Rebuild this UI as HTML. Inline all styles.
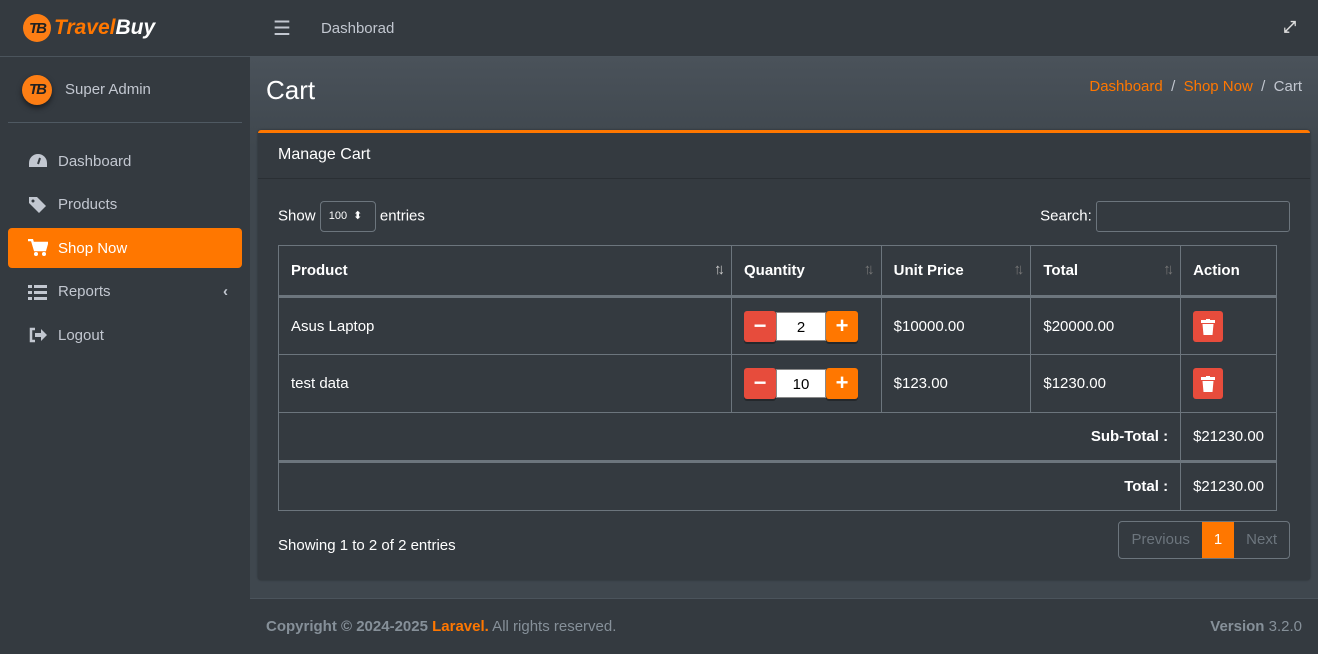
<!DOCTYPE html>
<html><head><meta charset="utf-8"><style>
*{box-sizing:border-box;margin:0;padding:0}
body{width:1318px;height:654px;overflow:hidden;background:#454d55;font-family:"Liberation Sans",sans-serif;color:#fff;font-size:15px;position:relative}
.side{position:absolute;left:0;top:0;width:250px;height:654px;background:#343a40;box-shadow:2px 0 6px rgba(0,0,0,.4)}
.brand{height:57px;border-bottom:1px solid #4b545c;display:flex;align-items:center;padding-left:23px}
.logo{width:28px;height:28px;border-radius:50%;background:#fd7e14;color:#222;font-weight:bold;font-style:italic;font-size:15px;display:flex;align-items:center;justify-content:center;letter-spacing:-2px}
.user{height:66px;margin:0 8px;border-bottom:1px solid #4f5962;display:flex;align-items:center;padding-left:14px;color:#c2c7d0}
.nav{padding-top:18px}
.nav div{height:40px;margin:0 8px 3.5px;border-radius:4px;display:flex;align-items:center;padding-left:20px;color:#c2c7d0;position:relative}
.nav div svg{margin-right:10px}
.nav .act{background:#ff7700;color:#fff}
.top{position:absolute;left:250px;top:0;right:0;height:57px;background:#343a40;border-bottom:1px solid #4b545c;display:flex;align-items:center}
.main{position:absolute;left:250px;top:57px;right:0;height:541px;background:linear-gradient(#4a525a,#3f474e 90px,#3f474e)}
.card{position:absolute;left:8px;top:73px;width:1052px;height:450px;background:#343a40;border-top:3px solid #ff7700;border-radius:3px;box-shadow:0 0 2px rgba(0,0,0,.4)}
table{position:absolute;left:20px;top:112px;width:999px;border-collapse:collapse;font-size:15px}
td,th{border:1px solid #6c757d;padding:0 12px;text-align:left;vertical-align:middle}
th{height:51px;border-bottom:3px solid #6c757d;position:relative}
.srt{position:absolute;right:10px;top:15px;color:#777;font-size:15px;letter-spacing:-4px;font-weight:normal}
.qb{display:inline-block;width:32px;height:31px;vertical-align:middle;text-align:center;line-height:30px;font-weight:bold;font-size:22px;border-radius:3px;box-shadow:0 2px 0 rgba(0,0,0,.3)}
.qi{display:inline-block;width:50px;height:29px;background:#fff;color:#000;vertical-align:middle;text-align:center;line-height:29px;border:1px solid #888}
.del{display:inline-block;width:30px;height:31px;background:#e74c3c;border-radius:3px;position:relative;top:2px}
.del svg{position:absolute;left:8px;top:8px}
.foot{position:absolute;left:250px;top:598px;right:0;height:56px;background:#343a40;border-top:1px solid #4b545c;display:flex;align-items:center;justify-content:space-between;padding:0 16px;color:#869099}
</style></head><body>
<div class="side">
 <div class="brand"><div class="logo">TB</div><span style="margin-left:3px;font-style:italic;font-weight:bold;font-size:21px;color:#ff7700">Travel<span style="color:#fff">Buy</span></span></div>
 <div class="user"><div class="logo" style="width:30px;height:30px;box-shadow:0 3px 6px rgba(0,0,0,.5)">TB</div><span style="margin-left:13px">Super Admin</span></div>
 <div class="nav">
  <div><svg width="20" height="16" viewBox="0 0 20 16"><path d="M10 1a9 9 0 0 0-9 9v4h18v-4a9 9 0 0 0-9-9z" fill="#c2c7d0"/><path d="M10 11l2-6" stroke="#343a40" stroke-width="2"/></svg>Dashboard</div>
  <div><svg width="20" height="18" viewBox="0 0 20 18"><path d="M1 1h8l9 9-7 7-10-10z" fill="#c2c7d0"/><circle cx="5" cy="5" r="1.5" fill="#343a40"/></svg>Products</div>
  <div class="act"><svg width="20" height="18" viewBox="0 0 20 18"><path d="M0 1h4l3 10h10l2-7H6" fill="none" stroke="#fff" stroke-width="2.5"/><path d="M6 4h13l-2 7H8z" fill="#fff"/><circle cx="8" cy="15" r="2" fill="#fff"/><circle cx="16" cy="15" r="2" fill="#fff"/></svg>Shop Now</div>
  <div><svg width="20" height="16" viewBox="0 0 20 16"><g fill="#c2c7d0"><rect x="0" y="1" width="4" height="3"/><rect x="0" y="7" width="4" height="3"/><rect x="0" y="13" width="4" height="3"/><rect x="6" y="1" width="13" height="3"/><rect x="6" y="7" width="13" height="3"/><rect x="6" y="13" width="13" height="3"/></g></svg>Reports<span style="position:absolute;right:14px;font-weight:bold">‹</span></div>
  <div><svg width="20" height="16" viewBox="0 0 20 16"><path d="M7 2H3v12h4" fill="none" stroke="#c2c7d0" stroke-width="2.5"/><path d="M7 6h6V2l6 6-6 6v-4H7z" fill="#c2c7d0"/></svg>Logout</div>
 </div>
</div>
<div class="top"><span style="margin-left:23px;font-size:20px;color:#c2c7d0">☰</span><span style="margin-left:30px;color:#c2c7d0">Dashborad</span><span style="position:absolute;right:22px;color:#ddd;font-size:16px;font-weight:bold">⤢</span></div>
<div class="main">
 <div style="position:absolute;left:16px;top:18px;font-size:26px">Cart</div>
 <div style="position:absolute;right:16px;top:21px;color:#c2c7d0"><span style="color:#ff7700">Dashboard</span> &nbsp;/&nbsp; <span style="color:#ff7700">Shop Now</span> &nbsp;/&nbsp; Cart</div>
 <div class="card">
  <div style="height:46px;border-bottom:1px solid #2a2f34;padding:13px 20px;font-size:16px">Manage Cart</div>
  <div style="position:absolute;left:20px;top:68px">Show <span style="display:inline-block;width:56px;height:31px;border:1px solid #6c757d;border-radius:4px;font-size:11px;line-height:29px;padding-left:8px;vertical-align:middle">100 &nbsp;⬍</span> entries</div>
  <div style="position:absolute;right:20px;top:68px">Search: <span style="display:inline-block;width:194px;height:31px;border:1px solid #6c757d;border-radius:3px;vertical-align:middle"></span></div>
  <table>
   <tr><th style="width:455px">Product<span class="srt" style="color:#ccc">↑↓</span></th><th style="width:150px">Quantity<span class="srt">↑↓</span></th><th style="width:150px">Unit Price<span class="srt">↑↓</span></th><th style="width:150px">Total<span class="srt">↑↓</span></th><th>Action</th></tr>
   <tr style="height:58px"><td>Asus Laptop</td><td><span class="qb" style="background:#e74c3c">−</span><span class="qi">2</span><span class="qb" style="background:#ff7700">+</span></td><td>$10000.00</td><td>$20000.00</td><td><span class="del"><svg width="14" height="16" viewBox="0 0 14 16"><rect x="0" y="1" width="14" height="3" fill="#fff"/><rect x="5" y="0" width="4" height="2" fill="#fff"/><path d="M1.5 5h11l-1 11h-9z" fill="#fff"/></svg></span></td></tr>
   <tr style="height:58px"><td>test data</td><td><span class="qb" style="background:#e74c3c">−</span><span class="qi">10</span><span class="qb" style="background:#ff7700">+</span></td><td>$123.00</td><td>$1230.00</td><td><span class="del"><svg width="14" height="16" viewBox="0 0 14 16"><rect x="0" y="1" width="14" height="3" fill="#fff"/><rect x="5" y="0" width="4" height="2" fill="#fff"/><path d="M1.5 5h11l-1 11h-9z" fill="#fff"/></svg></span></td></tr>
   <tr style="height:49px"><td colspan="4" style="text-align:right;font-weight:bold;border-bottom:3px solid #6c757d">Sub-Total :</td><td style="border-bottom:3px solid #6c757d">$21230.00</td></tr>
   <tr style="height:49px"><td colspan="4" style="text-align:right;font-weight:bold">Total :</td><td>$21230.00</td></tr>
  </table>
  <div style="position:absolute;left:20px;top:404px">Showing 1 to 2 of 2 entries</div>
  <div style="position:absolute;right:20px;top:388px;display:flex;border:1px solid #6c757d;border-radius:4px;height:38px;line-height:36px;color:#6c757d">
   <span style="padding:0 12px">Previous</span><span style="background:#ff7700;color:#fff;padding:0 12px">1</span><span style="padding:0 12px">Next</span></div>
 </div>
</div>
<div class="foot"><span><b>Copyright © 2024-2025 <span style="color:#ff7700">Laravel.</span></b> All rights reserved.</span><span><b>Version</b> 3.2.0</span></div>
</body></html>
